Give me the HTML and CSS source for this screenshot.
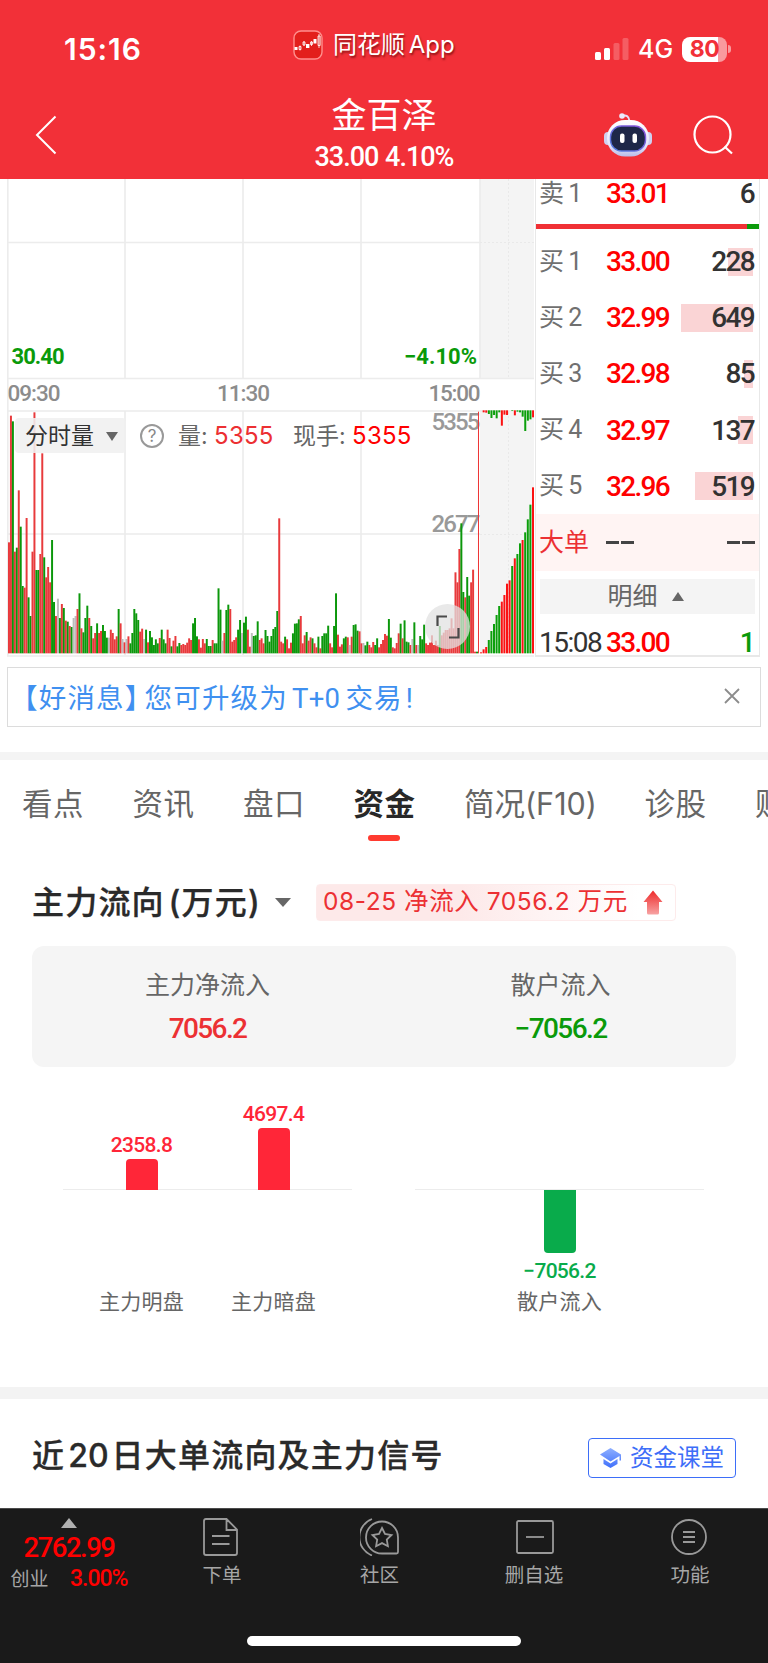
FILE: index.html
```html
<!DOCTYPE html>
<html lang="zh-CN">
<head>
    <meta charset="UTF-8">
    <meta name="viewport" content="width=device-width, initial-scale=1.0">
    <title>金百泽 33.00 4.10%</title>
    <link rel="stylesheet" href="styles.css">
</head>
<body>
    <header class="header">
        <div class="status-bar">
            <div class="clock">15:16</div>
            <div class="app-name">
                <svg class="app-icon" width="30" height="30" viewBox="0 0 30 30">
                    <rect x="1" y="1" width="28" height="28" rx="7" fill="#e31f1c" stroke="#ff8f8d" stroke-width="1.4"/>
                    <g fill="#fff">
                        <rect x="1.5" y="17" width="3" height="3"/>
                        <rect x="13" y="14" width="3.4" height="4"/>
                        <rect x="20.5" y="9" width="3" height="4.5"/>
                    </g>
                    <g fill="none" stroke="#fff" stroke-width="0.8">
                        <path d="M7 15.500v5M6 16.500h2v3H6zM11 11v5M10 12h2v3h-2zM18.500 11v5M17.500 12h2v2.500h-2zM26 4v14M25 6h2.200v9.500H25z"/>
                    </g>
                </svg>
                <span>同花顺 App</span>
            </div>
            <div class="status-icons">
                <svg width="34" height="22" viewBox="0 0 34 22" fill="#fff">
                    <rect x="0" y="14" width="6" height="8" rx="1.500"/>
                    <rect x="9" y="10" width="6" height="12" rx="1.500"/>
                    <rect x="18.500" y="5" width="6" height="17" rx="1.500" opacity=".22"/>
                    <rect x="27.500" y="0" width="6" height="22" rx="1.500" opacity=".22"/>
                </svg>
                <span class="network">4G</span>
                <span class="battery">80</span>
                <span class="battery-nub"></span>
            </div>
        </div>
        <div class="title-bar">
            <svg class="back" width="22" height="40" viewBox="0 0 22 40" fill="none" stroke="#fff" stroke-width="2">
                <path d="M20.500 1.500L2 20l18.500 18.500"/>
            </svg>
            <div class="stock">
                <h1>金百泽</h1>
                <p>33.00 4.10%</p>
            </div>
            <div class="title-actions">
                <svg width="48" height="44" viewBox="0 0 48 44">
                    <defs>
                        <linearGradient id="shell" x1="0" y1="0" x2="0" y2="1">
                            <stop offset="0" stop-color="#fff"/>
                            <stop offset=".7" stop-color="#e4e4fa"/>
                            <stop offset="1" stop-color="#b9bce8"/>
                        </linearGradient>
                        <linearGradient id="rim" x1="0" y1="1" x2="1" y2="0">
                            <stop offset="0" stop-color="#4f7fe0"/>
                            <stop offset="1" stop-color="#8b4fd8"/>
                        </linearGradient>
                    </defs>
                    <path d="M18 3c4-1.500 7 0 7.500 5" fill="none" stroke="#e6dcf6" stroke-width="2"/>
                    <circle cx="18" cy="3" r="2.800" fill="#ece9fb"/>
                    <rect x="0" y="19" width="8" height="13" rx="4" fill="#cfd0f0"/>
                    <rect x="40" y="19" width="8" height="13" rx="4" fill="#cfd0f0"/>
                    <rect x="3" y="7" width="42" height="36.500" rx="18" fill="url(#shell)"/>
                    <rect x="6.500" y="13" width="35" height="25" rx="11" fill="#1e2748" stroke="url(#rim)" stroke-width="1.400"/>
                    <rect x="16" y="20.500" width="4.500" height="9.500" rx="2" fill="#fff"/>
                    <rect x="28.500" y="20.500" width="4.500" height="9.500" rx="2" fill="#fff"/>
                </svg>
                <svg width="40" height="40" viewBox="0 0 40 40" fill="none" stroke="#fff" stroke-width="2.200">
                    <circle cx="19.500" cy="19.500" r="18"/>
                    <path d="M31.500 31.500l7.500 7"/>
                </svg>
            </div>
        </div>
    </header>

    <section class="quote">
        <div class="chart">
            <svg class="chart-svg" width="534" height="478" viewBox="0 0 534 478">
                <rect x="480" y="0" width="54" height="200" fill="#f4f4f4"/>
                <rect x="480" y="232" width="54" height="242" fill="#f4f4f4"/>
                <g fill="none" stroke="#ececec" stroke-width="1.600">
                    <path d="M7.800 0V477M125 0V200M243 0V200M361 0V200M480 0V200M7 63.500H480M7 199.500H534"/>
                    <path d="M125 232V476M243 232V476M361 232V476M7 232H534M7 355H480M7 477H534"/>
                </g>
                <g fill="none" stroke="#e9e9e9" stroke-dasharray="2 2">
                    <path d="M508.500 0V199M480 63.500H534M508.500 233V474M480 355.500H534"/>
                </g>
                <g class="axis-green">
                    <text x="11.500" y="184.500" textLength="53">30.40</text>
                    <text x="404" y="184.500" textLength="73">−4.10%</text>
                </g>
                <g class="axis-time">
                    <text x="7.500" y="222" textLength="53">09:30</text>
                    <text x="217" y="222" textLength="53">11:30</text>
                    <text x="428.500" y="222" textLength="52">15:00</text>
                </g>
                <g class="axis-volume">
                    <text x="431.500" y="251" textLength="49">5355</text>
                    <text x="431.500" y="353" textLength="49">2677</text>
                </g>
                <!-- volume bars use a grid three times as fine as the chart -->
                <g transform="translate(0 221) scale(0.33333)">
                    <g id="volume"></g>
                    <g id="auction"></g>
                    <path d="M1435.500 35V760" stroke="#e33" stroke-width="3"/>
                </g>
            </svg>
            <div class="volume-bar">
                <span class="volume-select">分时量 <i class="caret-down"></i></span>
                <span class="help">?</span>
                <span class="volume-item">量: <b>5355</b></span>
                <span class="volume-item current">现手: <b>5355</b></span>
            </div>
            <div class="expand">
                <svg width="24" height="24" viewBox="0 0 24 24" fill="none" stroke="#4a4a4a" stroke-width="2.200">
                    <path d="M1.500 11V1.500H11M22.500 13v9.500H13"/>
                </svg>
            </div>
        </div>

        <div class="order-book">
            <div class="order first"><span class="side">卖 1</span><span class="price">33.01</span><span class="size">6</span></div>
            <div class="ratio"><i></i></div>
            <div class="order"><span class="side">买 1</span><span class="price">33.00</span><span class="depth" style="width: 25px"></span><span class="size">228</span></div>
            <div class="order"><span class="side">买 2</span><span class="price">32.99</span><span class="depth" style="width: 72px"></span><span class="size">649</span></div>
            <div class="order"><span class="side">买 3</span><span class="price">32.98</span><span class="depth" style="width: 9px"></span><span class="size">85</span></div>
            <div class="order"><span class="side">买 4</span><span class="price">32.97</span><span class="depth" style="width: 15px"></span><span class="size">137</span></div>
            <div class="order"><span class="side">买 5</span><span class="price">32.96</span><span class="depth" style="width: 58px"></span><span class="size">519</span></div>
            <div class="order big"><span class="side">大单</span><span class="dashes"><i></i><i></i></span><span class="dashes end"><i></i><i></i></span></div>
            <div class="detail-toggle">明细 <i class="caret-up"></i></div>
            <div class="order trade"><span class="side">15:08</span><span class="price">33.00</span><span class="size">1</span></div>
        </div>
    </section>

    <div class="notice">
        <span><span class="tag">【好消息】</span>您可升级为<span class="latin">T+0</span>交易<span class="bang">!</span></span>
        <svg width="16" height="16" viewBox="0 0 16 16" stroke="#8c8c8c" stroke-width="1.800">
            <path d="M1 1l14 14M15 1L1 15"/>
        </svg>
    </div>

    <nav class="tabs">
        <a>看点</a>
        <a>资讯</a>
        <a>盘口</a>
        <a class="active">资金</a>
        <a>简况(F10)</a>
        <a>诊股</a>
        <a>财务</a>
    </nav>

    <section class="flow">
        <div class="flow-head">
            <h2>主力流向 (万元)</h2>
            <i class="caret-down"></i>
            <div class="flow-badge">
                <span>08-25 净流入 7056.2 万元</span>
                <svg width="20" height="25" viewBox="0 0 20 25">
                    <defs>
                        <linearGradient id="up" x1="0" y1="0" x2="0" y2="1">
                            <stop offset="0" stop-color="#ee2a2a"/>
                            <stop offset="1" stop-color="#f7a3a3"/>
                        </linearGradient>
                    </defs>
                    <path d="M10 .5L19.500 12H16v11q0 1.500-1.500 1.500h-9Q4 24.500 4 23V12H.5z" fill="url(#up)"/>
                </svg>
            </div>
        </div>
        <div class="summary">
            <div>
                <p>主力净流入</p>
                <b class="red">7056.2</b>
            </div>
            <div>
                <p>散户流入</p>
                <b class="green">−7056.2</b>
            </div>
        </div>
        <div class="bars">
            <div class="plot">
                <div class="col">
                    <div class="above"><b>2358.8</b><i style="height: 31px"></i></div>
                    <div class="below"></div>
                    <span>主力明盘</span>
                </div>
                <div class="col">
                    <div class="above"><b>4697.4</b><i style="height: 62px"></i></div>
                    <div class="below"></div>
                    <span>主力暗盘</span>
                </div>
            </div>
            <div class="plot">
                <div class="col">
                    <div class="above"></div>
                    <div class="below"><i style="height: 63px"></i><b>−7056.2</b></div>
                    <span>散户流入</span>
                </div>
            </div>
        </div>
    </section>

    <section class="signal">
        <h2>近<span class="days">20</span>日大单流向及主力信号</h2>
        <a class="course">
            <svg width="22" height="20" viewBox="0 0 22 20">
                <defs>
                    <linearGradient id="cap" x1="0" y1="0" x2="0" y2="1">
                        <stop offset="0" stop-color="#8fb0ff"/>
                        <stop offset="1" stop-color="#3f6ffb"/>
                    </linearGradient>
                </defs>
                <path d="M10.500 0L21 6.500v6h-1.500V8L10.500 13.500 0 6.500zM3.500 11l7 4.500 7-4.500v5l-7 4-7-4z" fill="url(#cap)"/>
            </svg>
            资金课堂
        </a>
    </section>

    <footer class="bottom">
        <div class="bottom-row">
            <div class="index">
                <i class="caret-up"></i>
                <b>2762.99</b>
                <p>创业 <em>3.00%</em></p>
            </div>
            <a class="action">
                <svg width="40" height="38" viewBox="0 0 40 38">
                    <path d="M24.500 1H4q-2 0-2 2v32q0 2 2 2h29q2 0 2-2V11.500zM24.500 1v11H35M10 18h17.500M10 26h17.500"/>
                </svg>
                下单
            </a>
            <a class="action">
                <svg width="40" height="38" viewBox="0 0 40 38">
                    <path d="M22 3.500a16 16 0 0 0 0 32h14.500q1.500 0 1.500-1.500V19.500a16 16 0 0 0-16-16z"/>
                    <path d="M12 1a19.500 19.500 0 0 0 0 36.500"/>
                    <path d="M22 10l3 6 6.500 1-4.700 4.600 1.100 6.600-5.900-3.100-5.900 3.100 1.100-6.600-4.700-4.600 6.500-1z"/>
                </svg>
                社区
            </a>
            <a class="action">
                <svg width="40" height="38" viewBox="0 0 40 38">
                    <rect x="3" y="3" width="36" height="32" rx="1.500"/>
                    <path d="M12 19h18"/>
                </svg>
                删自选
            </a>
            <a class="action">
                <svg width="40" height="38" viewBox="0 0 40 38">
                    <circle cx="19" cy="19" r="17"/>
                    <path d="M13 14h12M13 19h12M13 24h12"/>
                </svg>
                功能
            </a>
        </div>
        <div class="home-indicator"></div>
    </footer>

    <script src="chart.js"></script>
</body>
</html>
```
FILE: styles.css
```css
* {
    box-sizing: border-box;
}
body {
    margin: 0;
    width: 768px;
    height: 1663px;
    overflow: hidden;
    display: flex;
    flex-direction: column;
    font-family: Roboto, "Noto Sans CJK SC", sans-serif;
    background: #fff;
    color: #323232;
}
h1, h2, p {
    margin: 0;
    font-weight: 400;
}
i, em {
    font-style: normal;
}
.red {
    color: #ec3033;
}
.green {
    color: #0a9a0a;
}
.caret-down,
.caret-up {
    display: inline-block;
    border: 6px solid transparent;
}
.caret-down {
    border-top: 9px solid #666;
    border-bottom: 0;
}
.caret-up {
    border-bottom: 9px solid #666;
    border-top: 0;
}

/* header */
.header {
    flex: none;
    height: 179px;
    background: #f23038;
    color: #fff;
}
.status-bar {
    display: grid;
    grid-template-columns: 293px 1fr 173px;
    height: 92px;
}
.clock {
    padding: 31px 0 0 64px;
    font: 600 30px/36px Inter, sans-serif;
    letter-spacing: 1px;
}
.app-name {
    display: flex;
    align-items: center;
    gap: 10px;
    height: 30px;
    margin-top: 30px;
    font-family: Inter, "Noto Sans CJK SC", sans-serif;
    font-size: 24px;
    line-height: 30px;
    word-spacing: -3px;
    text-shadow: 1px 2px 2px rgba(80, 0, 0, .6);
}
.status-icons {
    display: flex;
    height: 26px;
    margin-top: 36px;
    align-items: center;
}
.network {
    margin-left: 9px;
    width: 44px;
    font: 500 25px/28px Inter, sans-serif;
}
.battery {
    width: 45px;
    height: 25px;
    border-radius: 8px;
    background: linear-gradient(90deg, #fff 36px, #f99a9e 36px);
    color: #f23038;
    font: 700 23px/25px Inter, sans-serif;
    text-align: center;
    letter-spacing: -0.5px;
}
.battery-nub {
    width: 3px;
    height: 8px;
    margin-left: 1px;
    border-radius: 0 4px 4px 0;
    background: #f99a9e;
}
.title-bar {
    display: grid;
    grid-template-columns: 250px 1fr 250px;
    height: 87px;
}
.back {
    margin: 23px 0 0 35px;
}
.stock {
    text-align: center;
}
.stock h1 {
    font-size: 35px;
    line-height: 49px;
}
.stock p {
    font-size: 27px;
    line-height: 32px;
    font-weight: 500;
    letter-spacing: -1px;
    word-spacing: 1px;
}
.title-actions {
    display: flex;
    gap: 41px;
    padding: 21px 0 0 86px;
}
.title-actions svg:last-child {
    margin-top: 2px;
}

/* chart and order book */
.quote {
    flex: none;
    display: flex;
    height: 478px;
}
.chart {
    position: relative;
    width: 535px;
}
.chart-svg {
    display: block;
}
.axis-green {
    font-size: 22px;
    font-weight: 700;
    fill: #0a9a0a;
}
.axis-time {
    font-size: 22.500px;
    font-weight: 500;
    fill: #8c8c8c;
}
.axis-volume {
    font-size: 24px;
    font-weight: 500;
    fill: #999;
}
.volume-bar {
    position: absolute;
    left: 15px;
    top: 239px;
    display: flex;
    align-items: center;
    height: 35px;
    font-family: Inter, "Noto Sans CJK SC", sans-serif;
    font-size: 23px;
    line-height: 35px;
    color: #666;
}
.volume-select {
    display: flex;
    align-items: center;
    justify-content: space-between;
    width: 111px;
    padding: 2px 8px 0 10px;
    height: 35px;
    border-radius: 4px;
    background: rgba(240, 240, 240, .88);
    color: #323232;
}
.help {
    width: 24px;
    height: 24px;
    margin: 0 14px 0 14px;
    border: 2px solid #999;
    border-radius: 50%;
    font-size: 17px;
    line-height: 20px;
    text-align: center;
    color: #888;
}
.volume-item {
    width: 115px;
    white-space: nowrap;
}
.volume-item b {
    font-weight: 400;
    font-size: 24px;
    letter-spacing: 0.2px;
    color: #ec3033;
}
.volume-item.current b {
    color: #f00;
}
.expand {
    position: absolute;
    left: 425px;
    top: 425px;
    display: flex;
    align-items: center;
    justify-content: center;
    width: 45px;
    height: 45px;
    border-radius: 50%;
    background: rgba(225, 225, 225, .75);
}
.order-book {
    display: flex;
    flex-direction: column;
    width: 225px;
    border: solid #e8e8e8;
    border-width: 0 1px 2px 1px;
    overflow: hidden;
}
.order {
    flex: none;
    display: flex;
    align-items: center;
    height: 56.200px;
    padding: 0 5px 0 3px;
    font-size: 28px;
    line-height: 29px;
    font-weight: 500;
    letter-spacing: -1.700px;
}
.side {
    width: 67px;
    margin-top: -1px;
    font-size: 25px;
    font-weight: 400;
    letter-spacing: 0;
    word-spacing: -2px;
    color: #707070;
}
.price {
    color: #f00;
}
.size {
    margin-left: auto;
    color: #323232;
}
.depth {
    height: 28px;
    margin-left: auto;
    background: #fad4d5;
}
/* the number is printed over the end of its depth bar */
.depth + .size {
    width: 60px;
    margin-left: -59px;
    text-align: right;
}
.order.first {
    height: 29px;
}
.ratio {
    flex: none;
    height: 5px;
    margin: 16px 0 4.500px;
    background: #0a9a0a;
}
.ratio i {
    display: block;
    width: 211px;
    height: 5px;
    background: #f03035;
}
.big {
    background: #fff4f3;
}
.big .side {
    color: #ec3033;
}
.dashes {
    display: flex;
    gap: 2px;
}
.dashes i {
    width: 13px;
    height: 3px;
    background: #444;
}
.dashes.end {
    margin-left: auto;
    margin-right: -1px;
}
.detail-toggle {
    flex: none;
    display: flex;
    align-items: center;
    justify-content: center;
    gap: 14px;
    height: 35px;
    margin: 8px 4px 0;
    padding-right: 4px;
    background: #f4f4f4;
    color: #666;
    font-size: 25px;
    line-height: 35px;
}
.trade {
    height: 58px;
}
.trade .side {
    margin-top: 0;
    font-size: 28px;
    letter-spacing: -1.500px;
    color: #323232;
}
.trade .size {
    color: #0a9a0a;
}

/* notice */
.notice {
    flex: none;
    display: flex;
    align-items: center;
    justify-content: space-between;
    width: 754px;
    height: 60px;
    margin: 10px 0 25px 7px;
    padding: 0 20px 2px 2px;
    border: 1px solid #dcdcdc;
    color: #3f90f0;
    font-size: 27.500px;
    letter-spacing: 1.200px;
}
.tag {
    margin-right: -9px;
}
.latin {
    margin: 0 5px 0 4px;
    letter-spacing: 0.3px;
}
.bang {
    margin-left: 3px;
}

/* tabs */
.tabs {
    flex: none;
    display: flex;
    gap: 48.500px;
    height: 98px;
    padding: 24px 0 0 22px;
    border-top: 8px solid #f4f4f4;
    overflow: hidden;
    white-space: nowrap;
    font-family: Inter, "Noto Sans CJK SC", sans-serif;
    font-size: 30.500px;
    line-height: 40px;
    letter-spacing: 0.500px;
    color: #666;
}
.tabs a {
    flex: none;
    height: 60px;
}
.tabs a:nth-child(5) {
    width: 132px;
    letter-spacing: 0;
}
.tabs .active {
    font-weight: 700;
    color: #282828;
}
.tabs .active::after {
    content: "";
    display: block;
    width: 32px;
    height: 6px;
    margin: 11px auto 0 14px;
    border-radius: 3px;
    background: #ff3b30;
}

/* capital flow */
.flow {
    flex: none;
    height: 537px;
    padding: 34px 32px 0;
}
.flow-head {
    display: flex;
    align-items: center;
    height: 37px;
}
.flow-head h2,
.signal h2 {
    font-family: Inter, "Noto Sans CJK SC", sans-serif;
    font-size: 32px;
    line-height: 37px;
    font-weight: 500;
    letter-spacing: 1.200px;
    white-space: nowrap;
    color: #2a2a2a;
    -webkit-text-stroke: 0.3px #2a2a2a;
}
.flow-head h2 {
    width: 243px;
    word-spacing: -6px;
}
.flow-head .caret-down {
    border-width: 9px 8px 0;
}
.flow-badge {
    display: flex;
    align-items: center;
    justify-content: space-between;
    width: 360px;
    height: 37px;
    margin-left: 25px;
    padding: 0 12px 0 6px;
    border: 1px solid #fdebeb;
    border-radius: 4px;
    background: linear-gradient(90deg, #fde9e9 40%, #fff 90%);
    color: #ec3033;
    font-family: Inter, "Noto Sans CJK SC", sans-serif;
    font-size: 24.500px;
    line-height: 33px;
    letter-spacing: 0.550px;
    white-space: nowrap;
}
.flow-badge span {
    margin-top: -2px;
}
.summary {
    display: flex;
    height: 121px;
    margin-top: 25px;
    padding-top: 22px;
    border-radius: 12px;
    background: #f5f5f5;
    text-align: center;
}
.summary div {
    flex: 1;
}
.summary div:first-child {
    padding-right: 2px;
}
.summary p {
    font-size: 25px;
    line-height: 36px;
    color: #666;
}
.summary b {
    display: block;
    margin-top: 8px;
    font-size: 28px;
    line-height: 34px;
    font-weight: 500;
    letter-spacing: -1.600px;
}
.bars {
    display: flex;
    justify-content: space-between;
    padding: 0 32px 0 31px;
}
.plot {
    display: flex;
    justify-content: center;
    width: 289px;
    background: linear-gradient(#ececec, #ececec) 0 122px / 100% 1px no-repeat;
}
.col {
    display: flex;
    flex-direction: column;
    align-items: center;
    width: 132px;
    font-size: 21px;
    color: #666;
}
.col b {
    font-weight: 500;
    line-height: 25px;
    letter-spacing: -0.700px;
}
.col i {
    width: 32px;
}
.above {
    display: flex;
    flex-direction: column;
    align-items: center;
    justify-content: flex-end;
    height: 123px;
    color: #ff2638;
}
.above i {
    margin-top: 1px;
    border-radius: 4px 4px 0 0;
    background: #ff2638;
}
.below {
    display: flex;
    flex-direction: column;
    align-items: center;
    height: 97px;
    color: #09ab4b;
}
.below i {
    margin-bottom: 6px;
    border-radius: 0 0 4px 4px;
    background: #09ab4b;
}
.col span {
    line-height: 30px;
    letter-spacing: 0.200px;
}

/* signal */
.signal {
    flex: none;
    display: flex;
    align-items: flex-start;
    justify-content: space-between;
    height: 121px;
    padding: 38px 32px 0;
    border-top: 12px solid #f3f3f3;
}
.signal .days {
    margin: 0 3px;
    letter-spacing: 0;
}
.course {
    display: flex;
    align-items: center;
    gap: 8px;
    width: 148px;
    height: 40px;
    margin-top: 1px;
    padding-left: 11px;
    border: 1.500px solid #3d6ef8;
    border-radius: 4px;
    color: #3d6ef8;
    font-size: 23.500px;
    line-height: 36px;
    white-space: nowrap;
}

/* bottom bar */
.bottom {
    flex: 1;
    border-top: 1px solid #4a4a4a;
    background: #1a1a1a;
    color: #a6a6a6;
}
.bottom-row {
    display: flex;
    height: 127px;
}
.index {
    width: 144px;
    padding: 9px 6px 0 0;
    display: flex;
    flex-direction: column;
    align-items: center;
    font-size: 19px;
}
.index .caret-up {
    border-width: 0 8px 10px;
    border-bottom-color: #b0b0b0;
}
.index b {
    margin-top: 4px;
    font-size: 27.500px;
    line-height: 32px;
    font-weight: 500;
    letter-spacing: -1.500px;
    color: #f00;
}
.index p {
    display: flex;
    justify-content: space-between;
    width: 117px;
    margin-top: 2px;
    line-height: 28px;
}
.index em {
    font-size: 23px;
    line-height: 26px;
    font-weight: 500;
    letter-spacing: -1px;
    color: #f00;
}
.action {
    display: flex;
    flex-direction: column;
    align-items: center;
    width: 156px;
    padding-top: 9px;
    font-size: 19.500px;
    line-height: 39px;
}
.action:nth-child(3) {
    padding-left: 3px;
}
.action svg {
    fill: none;
    stroke: #999;
    stroke-width: 1.800;
}
.home-indicator {
    width: 274px;
    height: 10px;
    margin: 0 auto;
    border-radius: 5px;
    background: #fff;
}
```
FILE: chart.js
```js
// r = up, g = down, x = flat; the number is the y of the bar's top
const volume = `
r427 r47 g64 r455 g443 r271 g380 g558 r563 r354 g592 g648 r455 r37 g510 g510 r462 r160 g472 r532
r501 r547 g420 g606 r648 x596 g654 r612 g624 r662 g665 r678 g681 x654 x648 r627 g580 r685 g697 g654
g617 r654 g678 r715 r699 g670 r699 r693 g675 g693 g713 x713 r689 r699 r718 r709 g627 r670 x717 r727
x717 r709 g730 g699 g627 g640 g660 r695 r686 x717 g689 r727 g693 g712 g735 g718 g730 r714 g689 g718
g730 r689 r714 g739 r722 r708 g739 g729 r735 r732 r735 r728 r715 r720 g670 g654 g709 r718 r743 r717
r730 g717 g738 g738 r720 g730 g730 g565 g629 x722 r699 g630 g614 r627 r725 r720 r712 g689 g660 x699
g668 g650 r689 r740 x699 g708 g706 g664 r720 r715 r730 g690 g708 g725 g708 g687 g681 g633 r355 r725
r730 g710 r718 r745 r728 g700 g671 g670 g658 r648 r730 r706 g696 r722 r712 g715 r730 r742 g710 r745
g708 g700 g700 g677 r730 r742 g678 g580 r704 r740 r733 g715 g710 r712 x735 r710 g675 g673 g692 r694
r730 x729 g736 g725 r735 r742 r726 g735 g715 r742 r732 r720 r702 r707 g657 g713 r742 r745 r729 r700
g671 r715 g661 g725 g727 r735 x717 g667 r735 x735 g708 g718 g674 r730 r735 r728 r706 r735 r722 r735
g678 r706 r698 r690 r690 r685 r655 r685 r517 r547 r447 g370 g576 r592 g531 g587 r547 r509 r755 g755
`.trim().split(/\s+/);

const auctionUp = 'r757 r748 r741 g720 g693 g672 g645 g618 r605 r585 r551 r541 g498 r475 g462 g430 r420 g397 g358 g314 r262'.split(' ');
const auctionDown = 'r37 r38 g42 g54 g45 g55 g37 r77 r44 r45 g31 g33 r46 g35 g37 g50 g93 g62 g58 r52'.split(' ');

const colors = { r: '#e83a3c', g: '#0b970b', x: '#bdbdbd' };
const brightColors = { r: '#fb1212', g: '#0b9f0b' };

function bar(x, y1, y2, width, color) {
    return `<rect x="${x}" y="${y1}" width="${width}" height="${y2 - y1}" fill="${color}"/>`;
}

document.getElementById('volume').innerHTML = volume
    .map((v, i) => bar(24 + i * 5.875, +v.slice(1), 760, 5.9, colors[v[0]]))
    .join('');

document.getElementById('auction').innerHTML =
    auctionUp.map((v, i) => bar(1440 + i * 7.8, +v.slice(1), 760, 6, brightColors[v[0]])).join('') +
    auctionDown.map((v, i) => bar(1448 + i * 7.8, 31, +v.slice(1), 6, brightColors[v[0]])).join('');
```
